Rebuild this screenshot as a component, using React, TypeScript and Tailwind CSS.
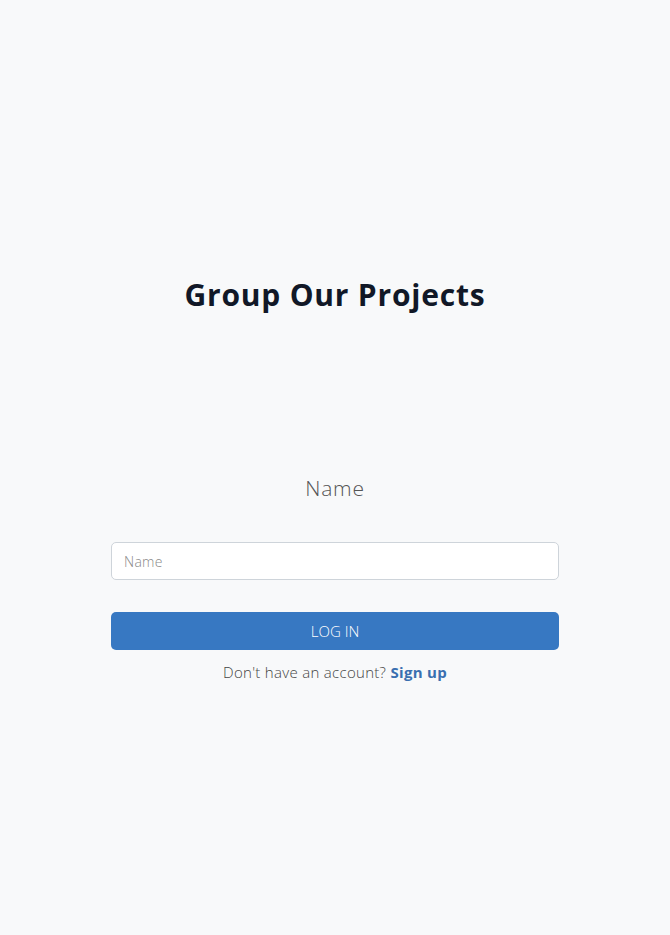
export default function App() {
  return (
    <div className="min-h-[935px] w-full bg-[#f8f9fa] font-['Open_Sans',sans-serif]">
      <div className="mx-auto flex w-[448px] flex-col items-center pt-[277px]">
        <h1 className="text-[30px] font-bold leading-[36px] tracking-[0.8px] text-[#111827]">
          Group Our Projects
        </h1>
        <div className="mt-[161px] text-[21px] font-light leading-[28px] tracking-[0.8px] text-[#555]">Name</div>
        <input
          type="text"
          placeholder="Name"
          className="mt-[40px] h-[38px] w-full rounded-[5px] border border-[#ced4da] bg-white px-[12px] text-[14px] font-light tracking-[0.3px] text-[#333] placeholder:text-[#888] outline-none"
        />
        <button className="mt-[32px] h-[38px] w-full rounded-[5px] bg-[#3778c2] text-[15px] font-light text-white">
          LOG IN
        </button>
        <p className="mt-[12px] text-[15px] font-light leading-[20px] tracking-[0.3px] text-[#444]">
          Don't have an account? <span className="font-bold text-[#3a6fb0]">Sign up</span>
        </p>
      </div>
    </div>
  );
}
